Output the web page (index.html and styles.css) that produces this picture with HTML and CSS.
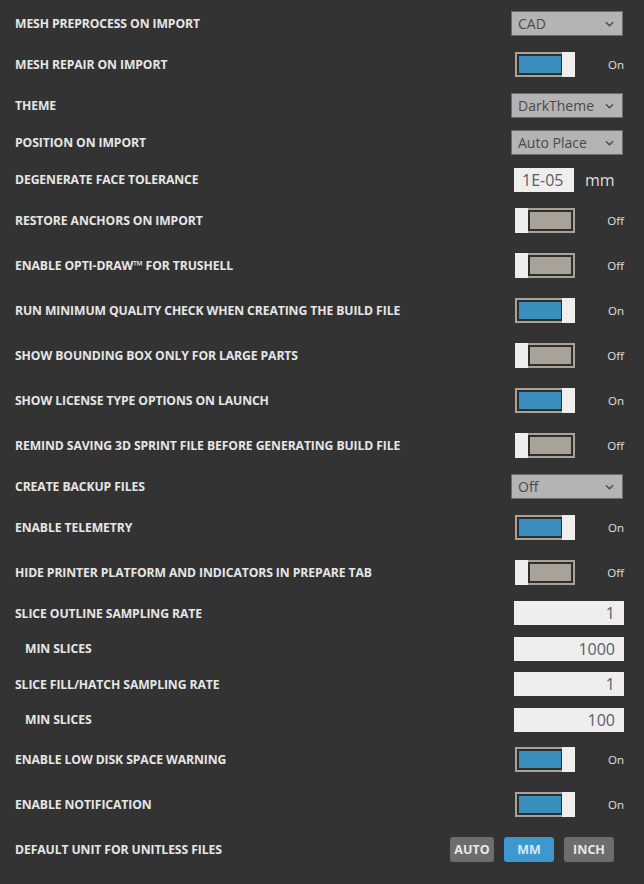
FILE: index.html
```html
<!DOCTYPE html>
<html>
<head>
    <title>Settings</title>
    <meta charset="utf-8">
    <link rel="stylesheet" href="styles.css">
</head>
<body>
    <div class="settings">
        <div class="row row-select">
            <span class="label">MESH PREPROCESS ON IMPORT</span>
            <div class="select">CAD <svg class="chev" viewBox="0 0 10 6" width="9" height="6"><path d="M1 1 L5 5 L9 1" /></svg></div>
        </div>
        <div class="row row-toggle">
            <span class="label">MESH REPAIR ON IMPORT</span>
            <div class="switch on"><div class="track"><div class="fill"></div></div><div class="knob"></div><span class="state">On</span></div>
        </div>
        <div class="row row-select">
            <span class="label">THEME</span>
            <div class="select">DarkTheme <svg class="chev" viewBox="0 0 10 6" width="9" height="6"><path d="M1 1 L5 5 L9 1" /></svg></div>
        </div>
        <div class="row row-select">
            <span class="label">POSITION ON IMPORT</span>
            <div class="select">Auto Place <svg class="chev" viewBox="0 0 10 6" width="9" height="6"><path d="M1 1 L5 5 L9 1" /></svg></div>
        </div>
        <div class="row row-select">
            <span class="label">DEGENERATE FACE TOLERANCE</span>
            <div class="unit-field"><span class="unit-input">1E-05</span><span class="unit">mm</span></div>
        </div>
        <div class="row row-toggle">
            <span class="label">RESTORE ANCHORS ON IMPORT</span>
            <div class="switch off"><div class="knob"></div><div class="track"><div class="fill"></div></div><span class="state">Off</span></div>
        </div>
        <div class="row row-toggle">
            <span class="label">ENABLE OPTI-DRAW™ FOR TRUSHELL</span>
            <div class="switch off"><div class="knob"></div><div class="track"><div class="fill"></div></div><span class="state">Off</span></div>
        </div>
        <div class="row row-toggle">
            <span class="label">RUN MINIMUM QUALITY CHECK WHEN CREATING THE BUILD FILE</span>
            <div class="switch on"><div class="track"><div class="fill"></div></div><div class="knob"></div><span class="state">On</span></div>
        </div>
        <div class="row row-toggle">
            <span class="label">SHOW BOUNDING BOX ONLY FOR LARGE PARTS</span>
            <div class="switch off"><div class="knob"></div><div class="track"><div class="fill"></div></div><span class="state">Off</span></div>
        </div>
        <div class="row row-toggle">
            <span class="label">SHOW LICENSE TYPE OPTIONS ON LAUNCH</span>
            <div class="switch on"><div class="track"><div class="fill"></div></div><div class="knob"></div><span class="state">On</span></div>
        </div>
        <div class="row row-toggle">
            <span class="label">REMIND SAVING 3D SPRINT FILE BEFORE GENERATING BUILD FILE</span>
            <div class="switch off"><div class="knob"></div><div class="track"><div class="fill"></div></div><span class="state">Off</span></div>
        </div>
        <div class="row row-select">
            <span class="label">CREATE BACKUP FILES</span>
            <div class="select">Off <svg class="chev" viewBox="0 0 10 6" width="9" height="6"><path d="M1 1 L5 5 L9 1" /></svg></div>
        </div>
        <div class="row row-toggle">
            <span class="label">ENABLE TELEMETRY</span>
            <div class="switch on"><div class="track"><div class="fill"></div></div><div class="knob"></div><span class="state">On</span></div>
        </div>
        <div class="row row-toggle">
            <span class="label">HIDE PRINTER PLATFORM AND INDICATORS IN PREPARE TAB</span>
            <div class="switch off"><div class="knob"></div><div class="track"><div class="fill"></div></div><span class="state">Off</span></div>
        </div>
        <div class="row row-input">
            <span class="label">SLICE OUTLINE SAMPLING RATE</span>
            <span class="num-input">1</span>
        </div>
        <div class="row row-input short">
            <span class="label sub">MIN SLICES</span>
            <span class="num-input">1000</span>
        </div>
        <div class="row row-input">
            <span class="label">SLICE FILL/HATCH SAMPLING RATE</span>
            <span class="num-input">1</span>
        </div>
        <div class="row row-input short">
            <span class="label sub">MIN SLICES</span>
            <span class="num-input">100</span>
        </div>
        <div class="row row-toggle">
            <span class="label">ENABLE LOW DISK SPACE WARNING</span>
            <div class="switch on"><div class="track"><div class="fill"></div></div><div class="knob"></div><span class="state">On</span></div>
        </div>
        <div class="row row-toggle">
            <span class="label">ENABLE NOTIFICATION</span>
            <div class="switch on"><div class="track"><div class="fill"></div></div><div class="knob"></div><span class="state">On</span></div>
        </div>
        <div class="row row-toggle">
            <span class="label">DEFAULT UNIT FOR UNITLESS FILES</span>
            <div class="unit-buttons">
                <span class="unit-btn auto">AUTO</span>
                <span class="unit-btn active">MM</span>
                <span class="unit-btn">INCH</span>
            </div>
        </div>
    </div>
</body>
</html>
```

FILE: styles.css
```css
body {
    margin: 0;
    padding: 0;
    background: #333333;
    font-family: "Open Sans", "Noto Sans", sans-serif;
}

.settings {
    padding: 5px 20px 0 15px;
}

.row {
    display: flex;
    align-items: center;
    justify-content: space-between;
}

.row-select {
    height: 37px;
}

.row-toggle {
    height: 45px;
}

.row-input {
    height: 36px;
}

.row-input.short {
    height: 35px;
}

.label {
    color: #e6e6e6;
    font-weight: 700;
    font-size: 12.2px;
    letter-spacing: -0.1px;
}

.label.sub {
    padding-left: 10px;
}

/* dropdowns */
.select {
    box-sizing: border-box;
    width: 112px;
    height: 25px;
    margin-right: 1px;
    padding: 0 0 0 6px;
    display: flex;
    align-items: center;
    justify-content: space-between;
    background: #b4b4b4;
    border: 1px solid #6c6c6c;
    color: #4a4a4a;
    font-size: 14px;
}

.chev {
    margin-right: 8px;
    fill: none;
    stroke: #4a4a4a;
    stroke-width: 1.5;
}

/* on/off switch */
.switch {
    width: 109px;
    display: flex;
    align-items: center;
}

.track {
    box-sizing: border-box;
    width: 47px;
    height: 25px;
    border: 2px solid #a9a296;
}

.fill {
    box-sizing: border-box;
    height: 100%;
    border: 2px solid #2e2e2e;
}

.switch.on .track {
    border-right: 0;
}

.switch.on .fill {
    background: #3b8fbd;
    border-right-width: 1px;
}

.switch.off .track {
    border-left: 0;
    background: #a9a296;
}

.switch.off .fill {
    background: #a9a296;
}

.knob {
    width: 13px;
    height: 25px;
    background: #efeeed;
}

.state {
    margin-left: auto;
    color: #e0e0e0;
    font-size: 11.5px;
}

/* text inputs */
.unit-field {
    width: 110px;
    display: flex;
    align-items: center;
}

.unit-input {
    box-sizing: border-box;
    width: 60px;
    height: 24px;
    line-height: 24px;
    padding-left: 8px;
    background: #efeeed;
    color: #55606c;
    font-size: 16px;
}

.unit {
    margin-left: 11px;
    color: #dddddd;
    font-size: 16px;
}

.num-input {
    box-sizing: border-box;
    width: 110px;
    height: 24px;
    line-height: 24px;
    padding-right: 9px;
    text-align: right;
    background: #efeeed;
    color: #55606c;
    font-size: 16px;
}

/* unit buttons */
.unit-buttons {
    display: flex;
    gap: 10px;
    margin-right: 10px;
}

.unit-btn {
    box-sizing: border-box;
    width: 50px;
    height: 25px;
    line-height: 25px;
    text-align: center;
    border-radius: 3px;
    background: #6d6d6d;
    color: #e8e8e8;
    font-weight: 700;
    font-size: 12.5px;
}

.unit-btn.auto {
    width: 44px;
}

.unit-btn.active {
    background: #3c98cf;
    color: #dbe6ee;
}
```
